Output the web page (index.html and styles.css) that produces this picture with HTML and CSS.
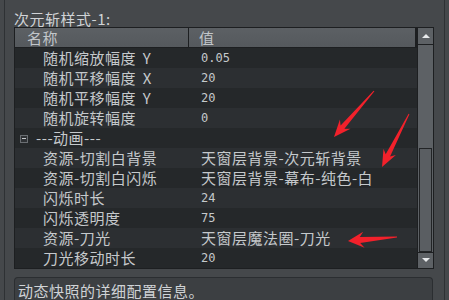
FILE: index.html
```html
<!DOCTYPE html>
<html lang="zh-CN">
<head>
    <meta charset="UTF-8">
    <title>次元斩样式</title>
    <link rel="stylesheet" href="styles.css">
</head>
<body>
    <div class="pane">
        <div class="title">次元斩样式-1:</div>
        <div class="table">
            <div class="list">
                <div class="head">
                    <div class="hcell hname">名称</div>
                    <div class="hcell hval">值</div>
                </div>
                <div class="row"><span class="key">随机缩放幅度 Y</span><span class="val num">0.05</span></div>
                <div class="row"><span class="key">随机平移幅度 X</span><span class="val num">20</span></div>
                <div class="row"><span class="key">随机平移幅度 Y</span><span class="val num">20</span></div>
                <div class="row"><span class="key">随机旋转幅度</span><span class="val num">0</span></div>
                <div class="row group"><span class="toggle"></span><span class="gname">---动画---</span></div>
                <div class="row"><span class="key">资源-切割白背景</span><span class="val">天窗层背景-次元斩背景</span></div>
                <div class="row"><span class="key">资源-切割白闪烁</span><span class="val">天窗层背景-幕布-纯色-白</span></div>
                <div class="row"><span class="key">闪烁时长</span><span class="val num">24</span></div>
                <div class="row"><span class="key">闪烁透明度</span><span class="val num">75</span></div>
                <div class="row"><span class="key">资源-刀光</span><span class="val">天窗层魔法圈-刀光</span></div>
                <div class="row"><span class="key">刀光移动时长</span><span class="val num">20</span></div>
            </div>
            <div class="scroll">
                <div class="sbtn up"><span class="tri-up"></span></div>
                <div class="track"><div class="thumb"></div></div>
                <div class="sbtn down"><span class="tri-down"></span></div>
            </div>
        </div>
        <div class="info">动态快照的详细配置信息。</div>
    </div>

    <!-- red markers drawn over the table -->
    <svg class="marks" width="449" height="300" viewBox="0 0 449 300">
        <polygon points="334,137 339.9,119.6 340.6,125.6 373.6,90.7 374.4,91.3 344.4,128.8 350.5,128.8"/>
        <polygon points="382,167 383.5,148.7 385.7,154.3 408.6,113.8 409.4,114.2 390.1,156.5 395.9,155.1"/>
        <polygon points="348,241 363.2,231.7 359.8,237 397,236.5 397,237.5 360.2,243 364.6,247.7"/>
    </svg>
</body>
</html>
```

FILE: styles.css
```css
:root {
    --bg: #45484b;
    --line: #1d1f21;
    --row-a: #25282a;
    --row-b: #2c2f32;
    --bar: #5d6165;
    --text: #c5c9cc;
}
html, body {
    height: 300px;
}
body {
    margin: 0;
    background: var(--bg);
    font-family: "Noto Sans CJK SC", "Noto Sans", sans-serif;
    font-size: 15px;
    letter-spacing: 0.5px;
    color: var(--text);
    overflow: hidden;
}
.pane {
    margin-left: 4px;
    width: 441px;
    height: 300px;
    box-sizing: border-box;
    border-left: 1px solid #2e3134;
    border-right: 1px solid #2e3134;
    padding: 10px 0 0 9px;
}
.title {
    line-height: 17px;
    color: #d0d3d6;
}
.table {
    display: flex;
    width: 420px;
    height: 242px;
    box-sizing: border-box;
    border: 1px solid var(--line);
}
.list {
    flex: 1;
    background: var(--row-a);
}
.head {
    display: flex;
    height: 20px;
    box-sizing: border-box;
    border-bottom: 1px solid var(--line);
    background: linear-gradient(#5c6064, #55595d);
    border-right: 2px solid var(--line);
}
.hcell {
    line-height: 19px;
    color: #c2c6ca;
}
.hname {
    width: 174px;
    padding-left: 12px;
    box-sizing: border-box;
    border-right: 1px solid var(--line);
}
.hval {
    padding-left: 10px;
}
.row {
    display: grid;
    grid-template-columns: 175px 1fr;
    height: 20px;
    line-height: 20px;
    background: var(--row-a);
}
.row:nth-child(odd) {
    background: var(--row-b);
}
.key {
    padding-left: 28px;
    white-space: nowrap;
    word-spacing: 3px;
}
.val {
    padding-left: 11px;
    white-space: nowrap;
}
.num {
    font-family: "DejaVu Sans Mono", monospace;
    font-size: 12px;
    letter-spacing: 0;
}
.group {
    display: flex;
    align-items: center;
    padding-left: 5px;
}
.toggle {
    width: 8px;
    height: 8px;
    box-sizing: border-box;
    border: 1px solid #6a6e72;
    background: #2e3134;
    position: relative;
    margin-top: 1px;
}
.toggle::after {
    content: "";
    position: absolute;
    left: 1px;
    right: 1px;
    top: 2px;
    height: 1px;
    background: #c5c9cc;
}
.gname {
    margin-left: 8px;
}
.scroll {
    width: 16px;
    box-sizing: border-box;
    border-left: 1px solid var(--line);
    display: flex;
    flex-direction: column;
    background: var(--bar);
}
.sbtn {
    height: 16px;
    display: flex;
    align-items: center;
    justify-content: center;
}
.up {
    border-bottom: 1px solid var(--line);
}
.down {
    border-top: 1px solid var(--line);
}
.tri-up {
    border-left: 4px solid transparent;
    border-right: 4px solid transparent;
    border-bottom: 4px solid #e8eaec;
}
.tri-down {
    border-left: 4px solid transparent;
    border-right: 4px solid transparent;
    border-top: 4px solid #e8eaec;
}
.track {
    flex: 1;
    padding: 0 1px;
}
.thumb {
    margin-top: 103px;
    height: 104px;
    box-sizing: border-box;
    border: 1px solid #222426;
    background: #5a5e62;
}
.info {
    margin-top: 8px;
    width: 419px;
    height: 23px;
    box-sizing: border-box;
    border: 1px solid #2b2e31;
    border-bottom: none;
    border-radius: 4px 4px 0 0;
    background: #3c3f42;
    padding: 3px 3px 0;
    line-height: 20px;
    color: #d0d3d6;
}
.marks {
    position: absolute;
    left: 0;
    top: 0;
    fill: #f2212b;
    pointer-events: none;
}
```
